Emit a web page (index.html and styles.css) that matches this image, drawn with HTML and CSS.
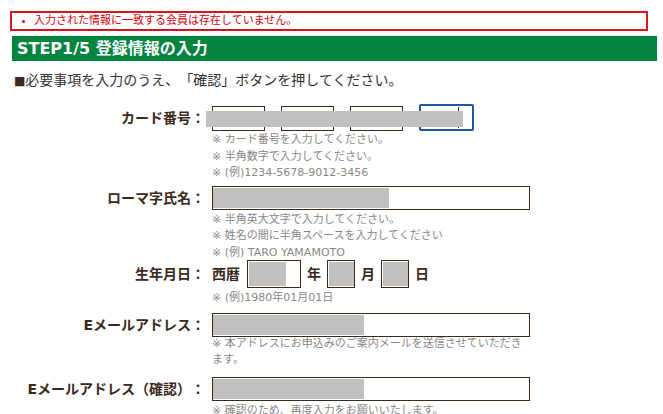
FILE: index.html
```html
<!DOCTYPE html>
<html lang="ja">
<head>
    <meta charset="UTF-8">
    <meta name="viewport" content="width=device-width, initial-scale=1.0">
    <title>STEP1/5 登録情報の入力</title>
    <link rel="stylesheet" href="styles.css">
</head>
<body>
    <div class="error-box">
        <ul>
            <li>入力された情報に一致する会員は存在していません。</li>
        </ul>
    </div>
    <h2 class="step-title">STEP1/5 登録情報の入力</h2>
    <p class="lead"><span class="square">■</span>必要事項を入力のうえ、「確認」ボタンを押してください。</p>

    <div class="form">
        <div class="row row-card">
            <div class="label">カード番号：</div>
            <div class="body">
                <div class="card-fields">
                    <div class="box box-card"></div>
                    <div class="box box-card"></div>
                    <div class="box box-card"></div>
                    <div class="box box-card focused"><span class="caret"></span></div>
                    <span class="mask mask-card"></span>
                </div>
                <div class="notes">
                    <p>※ カード番号を入力してください。</p>
                    <p>※ 半角数字で入力してください。</p>
                    <p>※ (例)1234-5678-9012-3456</p>
                </div>
            </div>
        </div>

        <div class="row row-name">
            <div class="label">ローマ字氏名：</div>
            <div class="body">
                <div class="box box-wide"><span class="mask mask-name"></span></div>
                <div class="notes">
                    <p>※ 半角英大文字で入力してください。</p>
                    <p>※ 姓名の間に半角スペースを入力してください</p>
                    <p>※ (例) TARO YAMAMOTO</p>
                </div>
            </div>
        </div>

        <div class="row row-birth">
            <div class="label">生年月日：</div>
            <div class="body">
                <div class="birth-fields">
                    <span class="unit">西暦</span>
                    <div class="box box-year"><span class="mask mask-year"></span></div>
                    <span class="unit">年</span>
                    <div class="box box-day"><span class="mask mask-day"></span></div>
                    <span class="unit">月</span>
                    <div class="box box-day"><span class="mask mask-day"></span></div>
                    <span class="unit">日</span>
                </div>
                <div class="notes">
                    <p>※ (例)1980年01月01日</p>
                </div>
            </div>
        </div>

        <div class="row row-mail">
            <div class="label">Eメールアドレス：</div>
            <div class="body">
                <div class="box box-wide"><span class="mask mask-mail"></span></div>
                <div class="notes notes-mail">
                    <p>※ 本アドレスにお申込みのご案内メールを送信させていただきます。</p>
                </div>
            </div>
        </div>

        <div class="row row-confirm">
            <div class="label">Eメールアドレス（確認）：</div>
            <div class="body">
                <div class="box box-wide"><span class="mask mask-mail"></span></div>
                <div class="notes">
                    <p>※ 確認のため、再度入力をお願いいたします。</p>
                </div>
            </div>
        </div>
    </div>
</body>
</html>
```

FILE: styles.css
```css
body {
    margin: 0;
    padding: 11px 6px 0 10px;
    font-family: "DejaVu Sans", "Noto Sans CJK JP", sans-serif;
    color: #333;
    background-color: #fff;
    text-spacing-trim: space-all;
}
p {
    margin: 0;
}
.error-box {
    width: 634px;
    height: 16px;
    border: 2px solid #d8141f;
}
.error-box ul {
    margin: 0;
    padding: 0 0 0 22px;
    color: #d9000d;
    font-size: 11px;
    line-height: 16px;
}
.error-box li::marker {
    font-size: 9px;
}
.step-title {
    margin: 5px 0 0 2px;
    height: 25px;
    padding: 0 5px;
    background-color: #00843f;
    color: #fff;
    font-size: 16px;
    font-weight: bold;
    line-height: 25px;
}
.lead {
    margin: 9px 0 0 4px;
    font-size: 14px;
    line-height: 20px;
    color: #333;
}
.square {
    font-size: 12px;
    color: #3b2a1c;
}
.form {
    margin-top: 13px;
    display: flex;
    flex-direction: column;
}
.row {
    display: grid;
    grid-template-columns: 195px 318px;
    column-gap: 7px;
    align-items: start;
}
.label {
    text-align: right;
    font-size: 14px;
    font-weight: bold;
    color: #3b2a1c;
    line-height: 24px;
    white-space: nowrap;
}
.box {
    position: relative;
    box-sizing: border-box;
    height: 24px;
    border: 1px solid #3b2a1c;
    background-color: #fff;
}
.mask {
    position: absolute;
    top: 1px;
    left: 0;
    height: 20px;
    background-color: #c0c0c0;
}
.notes {
    margin-top: 2px;
    font-size: 11px;
    line-height: 16.5px;
    color: #888;
}
.notes-mail {
    margin-top: -1px;
    width: 318px;
}

/* card number */
.card-fields {
    position: relative;
    display: flex;
    gap: 16px;
    align-items: flex-end;
    height: 27px;
}
.box-card {
    width: 53px;
    height: 25px;
}
.box-card.focused {
    width: 55px;
    height: 27px;
    border: 2px solid #1f57a5;
    border-radius: 2px;
}
.caret {
    position: absolute;
    left: 37px;
    top: 1px;
    width: 1px;
    height: 21px;
    background-color: #3b2a1c;
}
.mask-card {
    left: -6px;
    top: 7px;
    width: 257px;
    height: 16px;
}
.row-card .label {
    margin-top: 2px;
}
.row-card .notes {
    margin-top: 1px;
}

/* roman name */
.row-name {
    margin-top: 4px;
}
.box-wide {
    width: 318px;
}
.mask-name {
    width: 176px;
}

/* birthday */
.row-birth {
    margin-top: -1px;
}
.row-birth .label {
    line-height: 28px;
}
.birth-fields {
    display: flex;
    align-items: center;
    gap: 6px;
    height: 28px;
    font-size: 14px;
    font-weight: bold;
    color: #3b2a1c;
}
.birth-fields .unit {
    line-height: 28px;
}
.box-year {
    width: 54px;
    height: 28px;
    margin-left: 1px;
}
.box-day {
    width: 28px;
    height: 28px;
}
.mask-year {
    left: 1px;
    top: 1px;
    width: 37px;
    height: 24px;
}
.mask-day {
    left: 1px;
    top: 1px;
    width: 25px;
    height: 24px;
}

/* mail */
.row-mail {
    margin-top: 6px;
}
.mask-mail {
    width: 151px;
}
.row-confirm {
    margin-top: 8px;
}
```
